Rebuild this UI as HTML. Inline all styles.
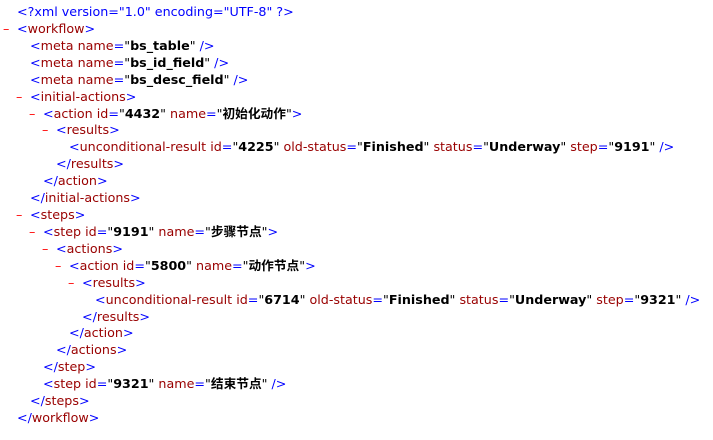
<!DOCTYPE html>
<html><head><meta charset="utf-8"><style>
body{margin:0;background:#fff;width:713px;height:440px;overflow:hidden;font-family:"DejaVu Sans","Noto Sans CJK SC",sans-serif;font-size:12.7px;}
.l{position:absolute;white-space:pre;height:17px;line-height:17px;}
.m{color:#0000ff}.t{color:#990000}.v{color:#000;font-weight:bold}.q{color:#000}.d{color:#ff0000;position:absolute;}
</style></head><body>
<div id="c"></div>
<script>
const L=[
[0,'<span class="m">&lt;?xml version="1.0" encoding="UTF-8" ?&gt;</span>',0],
[0,'<span class="m">&lt;</span><span class="t">workflow</span><span class="m">&gt;</span>',1],
[1,'<span class="m">&lt;</span><span class="t">meta</span> <span class="t">name</span><span class="m">=</span><span class="q">"</span><span class="v">bs_table</span><span class="q">"</span> <span class="m">/&gt;</span>',0],
[1,'<span class="m">&lt;</span><span class="t">meta</span> <span class="t">name</span><span class="m">=</span><span class="q">"</span><span class="v">bs_id_field</span><span class="q">"</span> <span class="m">/&gt;</span>',0],
[1,'<span class="m">&lt;</span><span class="t">meta</span> <span class="t">name</span><span class="m">=</span><span class="q">"</span><span class="v">bs_desc_field</span><span class="q">"</span> <span class="m">/&gt;</span>',0],
[1,'<span class="m">&lt;</span><span class="t">initial-actions</span><span class="m">&gt;</span>',1],
[2,'<span class="m">&lt;</span><span class="t">action</span> <span class="t">id</span><span class="m">=</span><span class="q">"</span><span class="v">4432</span><span class="q">"</span> <span class="t">name</span><span class="m">=</span><span class="q">"</span><span class="v">初始化动作</span><span class="q">"</span><span class="m">&gt;</span>',1],
[3,'<span class="m">&lt;</span><span class="t">results</span><span class="m">&gt;</span>',1],
[4,'<span class="m">&lt;</span><span class="t">unconditional-result</span> <span class="t">id</span><span class="m">=</span><span class="q">"</span><span class="v">4225</span><span class="q">"</span> <span class="t">old-status</span><span class="m">=</span><span class="q">"</span><span class="v">Finished</span><span class="q">"</span> <span class="t">status</span><span class="m">=</span><span class="q">"</span><span class="v">Underway</span><span class="q">"</span> <span class="t">step</span><span class="m">=</span><span class="q">"</span><span class="v">9191</span><span class="q">"</span> <span class="m">/&gt;</span>',0],
[3,'<span class="m">&lt;/</span><span class="t">results</span><span class="m">&gt;</span>',0],
[2,'<span class="m">&lt;/</span><span class="t">action</span><span class="m">&gt;</span>',0],
[1,'<span class="m">&lt;/</span><span class="t">initial-actions</span><span class="m">&gt;</span>',0],
[1,'<span class="m">&lt;</span><span class="t">steps</span><span class="m">&gt;</span>',1],
[2,'<span class="m">&lt;</span><span class="t">step</span> <span class="t">id</span><span class="m">=</span><span class="q">"</span><span class="v">9191</span><span class="q">"</span> <span class="t">name</span><span class="m">=</span><span class="q">"</span><span class="v">步骤节点</span><span class="q">"</span><span class="m">&gt;</span>',1],
[3,'<span class="m">&lt;</span><span class="t">actions</span><span class="m">&gt;</span>',1],
[4,'<span class="m">&lt;</span><span class="t">action</span> <span class="t">id</span><span class="m">=</span><span class="q">"</span><span class="v">5800</span><span class="q">"</span> <span class="t">name</span><span class="m">=</span><span class="q">"</span><span class="v">动作节点</span><span class="q">"</span><span class="m">&gt;</span>',1],
[5,'<span class="m">&lt;</span><span class="t">results</span><span class="m">&gt;</span>',1],
[6,'<span class="m">&lt;</span><span class="t">unconditional-result</span> <span class="t">id</span><span class="m">=</span><span class="q">"</span><span class="v">6714</span><span class="q">"</span> <span class="t">old-status</span><span class="m">=</span><span class="q">"</span><span class="v">Finished</span><span class="q">"</span> <span class="t">status</span><span class="m">=</span><span class="q">"</span><span class="v">Underway</span><span class="q">"</span> <span class="t">step</span><span class="m">=</span><span class="q">"</span><span class="v">9321</span><span class="q">"</span> <span class="m">/&gt;</span>',0],
[5,'<span class="m">&lt;/</span><span class="t">results</span><span class="m">&gt;</span>',0],
[4,'<span class="m">&lt;/</span><span class="t">action</span><span class="m">&gt;</span>',0],
[3,'<span class="m">&lt;/</span><span class="t">actions</span><span class="m">&gt;</span>',0],
[2,'<span class="m">&lt;/</span><span class="t">step</span><span class="m">&gt;</span>',0],
[2,'<span class="m">&lt;</span><span class="t">step</span> <span class="t">id</span><span class="m">=</span><span class="q">"</span><span class="v">9321</span><span class="q">"</span> <span class="t">name</span><span class="m">=</span><span class="q">"</span><span class="v">结束节点</span><span class="q">"</span> <span class="m">/&gt;</span>',0],
[1,'<span class="m">&lt;/</span><span class="t">steps</span><span class="m">&gt;</span>',0],
[0,'<span class="m">&lt;/</span><span class="t">workflow</span><span class="m">&gt;</span>',0]
];
let h='';
L.forEach((r,i)=>{const x=17+13*r[0],y=3+i*16.92;
h+=`<div class="l" style="left:${x}px;top:${y}px">${r[1]}</div>`;
if(r[2])h+=`<div class="l d" style="left:${x-14}px;top:${y}px">–</div>`;});
document.getElementById('c').innerHTML=h;
</script>
</body></html>
